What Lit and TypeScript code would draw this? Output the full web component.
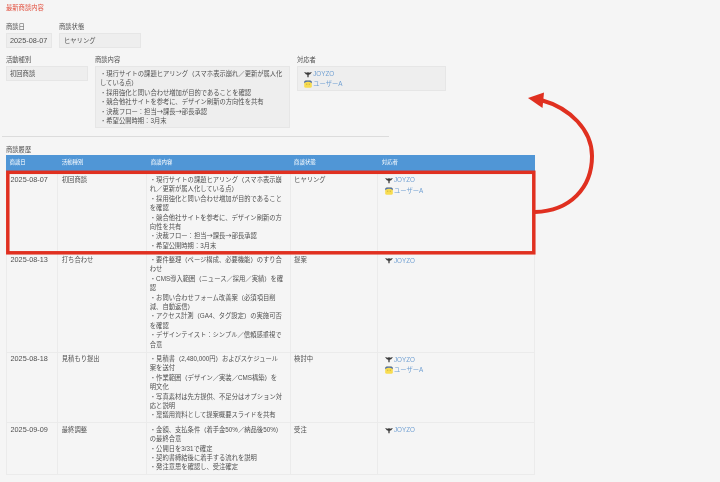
import { LitElement, html, css, svg } from "lit";
import { customElement } from "lit/decorators.js";

type Row = { date: string; kind: string; lines: string[]; status: string; users: string[] };

const rows: Row[] = [
  {
    date: "2025-08-07", kind: "初回商談", status: "ヒヤリング", users: ["JOYZO", "ユーザーA"],
    lines: [
      "・現行サイトの課題ヒアリング（スマホ表示崩", "れ／更新が属人化している点）",
      "・採用強化と問い合わせ増加が目的であること", "を確認",
      "・競合他社サイトを参考に、デザイン刷新の方", "向性を共有",
      "・決裁フロー：担当→課長→部長承認", "・希望公開時期：3月末",
    ],
  },
  {
    date: "2025-08-13", kind: "打ち合わせ", status: "提案", users: ["JOYZO"],
    lines: [
      "・要件整理（ページ構成、必要機能）のすり合", "わせ",
      "・CMS導入範囲（ニュース／採用／実績）を確", "認",
      "・お問い合わせフォーム改善案（必須項目削", "減、自動返信）",
      "・アクセス計測（GA4、タグ設定）の実施可否", "を確認",
      "・デザインテイスト：シンプル／信頼感重視で", "合意",
    ],
  },
  {
    date: "2025-08-18", kind: "見積もり提出", status: "検討中", users: ["JOYZO", "ユーザーA"],
    lines: [
      "・見積書（2,480,000円）およびスケジュール", "案を送付",
      "・作業範囲（デザイン／実装／CMS構築）を", "明文化",
      "・写真素材は先方提供、不足分はオプション対", "応と説明",
      "・稟議用資料として提案概要スライドを共有",
    ],
  },
  {
    date: "2025-09-09", kind: "最終調整", status: "受注", users: ["JOYZO"],
    lines: [
      "・金額、支払条件（着手金50%／納品後50%）", "の最終合意",
      "・公開日を3/31で確定", "・契約書締結後に着手する流れを説明",
      "・発注意思を確認し、受注確定",
    ],
  },
];

const bird = svg`<svg class="ic" viewBox="0 0 8 8"><path d="M0 2 L3 2.800 L3.500 2.300 L4.500 2.300 L5 2.800 L8 2 L6.200 4.300 L4.700 4.700 L4.600 7.200 L3.400 7.200 L3.300 4.700 L1.800 4.300 Z" fill="#3a3a3a"/></svg>`;
const avatar = svg`<svg class="ic" viewBox="0 0 8 8"><rect x="0.2" y="0.4" width="7.6" height="7.4" rx="1.6" fill="#f8dc50"/><path d="M0.2 3.200 V2 A1.6 1.6 0 0 1 1.800 0.4 H6.200 A1.600 1.600 0 0 1 7.800 2 V3.200 C6.500 2 5.500 1.800 4 1.800 C2.500 1.800 1.500 2 0.2 3.200 Z" fill="#4a6db5"/><rect x="2.400" y="3.800" width="0.8" height="0.7" fill="#8a7a30"/><rect x="4.800" y="3.800" width="0.8" height="0.7" fill="#8a7a30"/></svg>`;

function arrows(text: string) {
  return text.split("→").map((part, i) => (i === 0 ? part : html`<span class="cjk">→</span>${part}`));
}

@customElement("app-root")
export class AppRoot extends LitElement {
  static styles = css`
    :host {
      display: block;
      width: 720px;
      height: 482px;
      position: relative;
      overflow: hidden;
      background: #f5f5f5;
      color: #505050;
      font-family: "Liberation Sans", "Noto Sans CJK JP", sans-serif;
      font-size: 6.3px;
      line-height: 9.5px;
    }
    .page { padding: 3px 0 0 6px; filter: blur(0.3px); }
    .cjk { font-family: "Noto Sans CJK JP", sans-serif; }
    .title { color: #e2503f; height: 9.5px; }
    .row { display: flex; gap: 7px; align-items: flex-start; }
    .row.first { margin-top: 9.3px; }
    .row.second { margin-top: 7px; gap: 7.5px; }
    .label { height: 11px; }
    .field {
      box-sizing: border-box;
      background: #eeeeee;
      border: 1px solid #e6e6e6;
      padding: 1.8px 3px;
      min-height: 14.5px;
    }
    .w-date { width: 46px; }
    .w-status { width: 81.5px; padding-left: 4px; }
    .w-kind { width: 81.5px; }
    .w-body { width: 194.5px; height: 62px; padding-left: 4px; }
    .w-users { width: 149px; height: 25px; padding: 1.5px 0 0 6px; }
    .date { font-size: 7.3px; white-space: nowrap; }
    .line { white-space: nowrap; }
    .rule { height: 0; margin: 8.5px 0 0 -4px; width: 387px; border-top: 1px solid #dcdcdc; }
    .hist { margin-top: 7.5px; height: 10px; }
    .grid { width: 529px; box-sizing: border-box; border-left: 1px solid #ebebeb; line-height: 9.4px; }
    .tr {
      display: grid;
      grid-template-columns: 51.3px 89px 143.3px 87.7px 156.7px;
      border-bottom: 1px solid #ebebeb;
    }
    .th {
      background: #5096d6;
      color: #fff;
      font-size: 5.4px;
      height: 16px;
      padding: 3px 3.5px 0;
      box-sizing: border-box;
    }
    .tr.head { border-bottom: none; margin-left: -1px; grid-template-columns: 52.3px 89px 143.3px 87.7px 156.7px; }
    .td { padding: 1.3px 3.5px 2.6px; border-right: 1px solid #ebebeb; box-sizing: border-box; min-width: 0; }
    .tr.r0 .td { padding-top: 4px; }
    .td.body { padding-left: 2.5px; }
    .users { padding-left: 3px; }
    .user { display: flex; align-items: center; height: 10.5px; }
    .ic { width: 8px; height: 8px; flex: none; margin-right: 1.2px; }
    .user span { color: #6f9fd2; white-space: nowrap; }
    .overlay { position: absolute; inset: 0; width: 720px; height: 482px; pointer-events: none; }
  `;

  private user(name: string) {
    return html`<div class="user">${name === "JOYZO" ? bird : avatar}<span>${name}</span></div>`;
  }

  render() {
    return html`
      <div class="page">
        <div class="title">最新商談内容</div>
        <div class="row first">
          <div><div class="label">商談日</div><div class="field w-date date">2025-08-07</div></div>
          <div><div class="label">商談状態</div><div class="field w-status">ヒヤリング</div></div>
        </div>
        <div class="row second">
          <div><div class="label">活動種別</div><div class="field w-kind">初回商談</div></div>
          <div>
            <div class="label">商談内容</div>
            <div class="field w-body">
              ${["・現行サイトの課題ヒアリング（スマホ表示崩れ／更新が属人化", "している点）", "・採用強化と問い合わせ増加が目的であることを確認", "・競合他社サイトを参考に、デザイン刷新の方向性を共有", "・決裁フロー：担当→課長→部長承認", "・希望公開時期：3月末"].map((l) => html`<div class="line">${arrows(l)}</div>`)}
            </div>
          </div>
          <div>
            <div class="label">対応者</div>
            <div class="field w-users">${this.user("JOYZO")}${this.user("ユーザーA")}</div>
          </div>
        </div>
        <div class="rule"></div>
        <div class="hist">商談履歴</div>
        <div class="grid">
          <div class="tr head">
            ${["商談日", "活動種別", "商談内容", "商談状態", "対応者"].map((h) => html`<div class="th">${h}</div>`)}
          </div>
          ${rows.map((r, i) => html`<div class="tr r${i}">
            <div class="td date">${r.date}</div>
            <div class="td">${r.kind}</div>
            <div class="td body">${r.lines.map((l) => html`<div class="line">${arrows(l)}</div>`)}</div>
            <div class="td">${r.status}</div>
            <div class="td"><div class="users">${r.users.map((u) => this.user(u))}</div></div>
          </div>`)}
        </div>
      </div>
      <svg class="overlay" viewBox="0 0 720 482">
        <rect x="7.8" y="172.3" width="526" height="80.5" fill="none" stroke="#e03020" stroke-width="3.5"/>
        <path d="M535 212 C570 211 592 188 592 156 C592 130 570 108 541 100" fill="none" stroke="#e03020" stroke-width="4"/>
        <path d="M528 98 L544 92.5 L542.5 108 Z" fill="#e03020"/>
      </svg>
    `;
  }
}
